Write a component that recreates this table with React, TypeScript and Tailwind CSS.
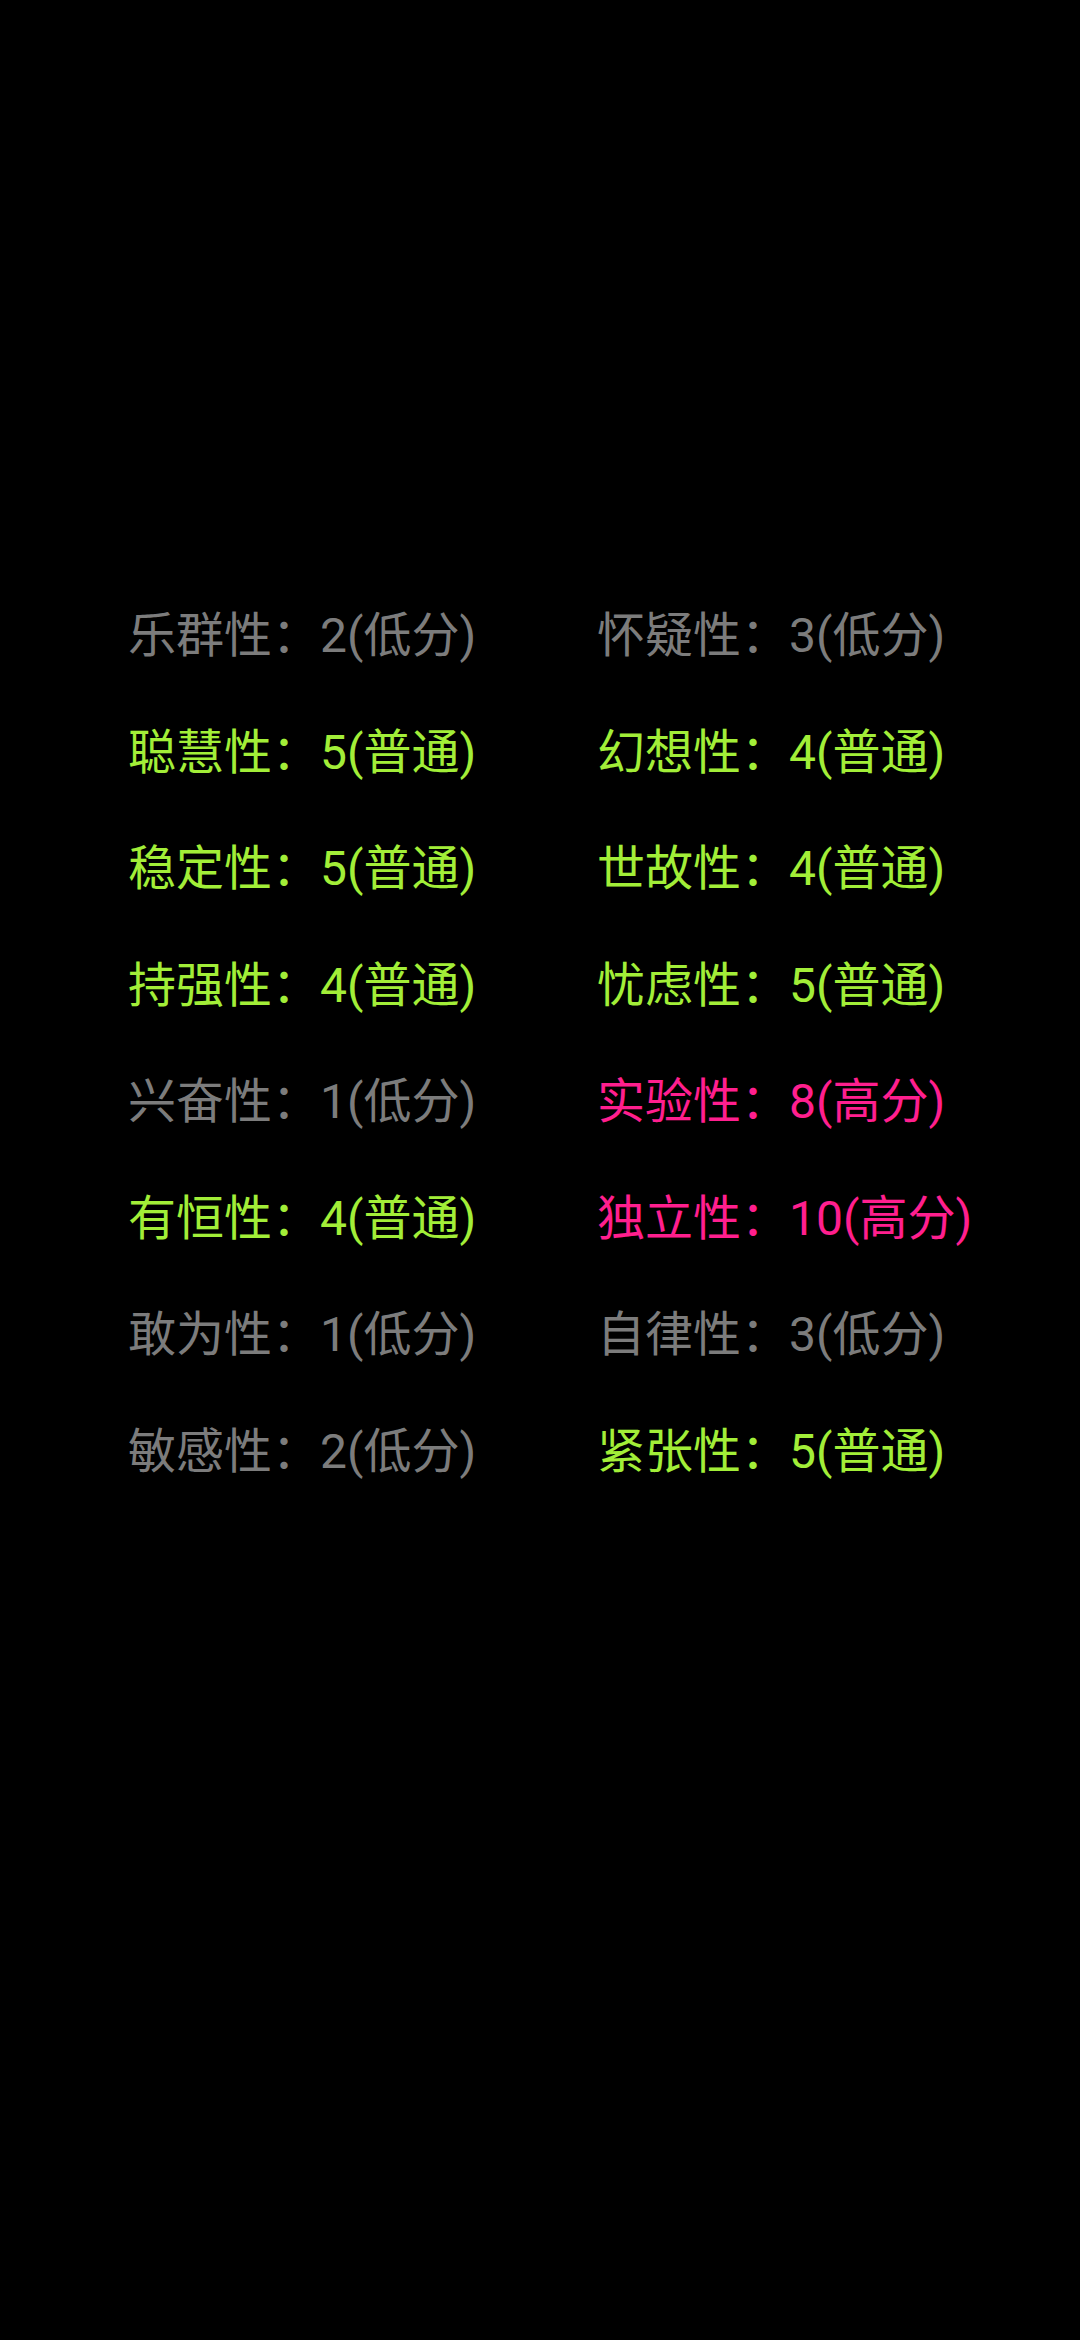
import React from "react";

type Item = { name: string; score: number; level: "低分" | "普通" | "高分" };

const rows: [Item, Item][] = [
  [{ name: "乐群性", score: 2, level: "低分" }, { name: "怀疑性", score: 3, level: "低分" }],
  [{ name: "聪慧性", score: 5, level: "普通" }, { name: "幻想性", score: 4, level: "普通" }],
  [{ name: "稳定性", score: 5, level: "普通" }, { name: "世故性", score: 4, level: "普通" }],
  [{ name: "持强性", score: 4, level: "普通" }, { name: "忧虑性", score: 5, level: "普通" }],
  [{ name: "兴奋性", score: 1, level: "低分" }, { name: "实验性", score: 8, level: "高分" }],
  [{ name: "有恒性", score: 4, level: "普通" }, { name: "独立性", score: 10, level: "高分" }],
  [{ name: "敢为性", score: 1, level: "低分" }, { name: "自律性", score: 3, level: "低分" }],
  [{ name: "敏感性", score: 2, level: "低分" }, { name: "紧张性", score: 5, level: "普通" }],
];

function Cell({ item }: { item: Item }) {
  const color =
    item.level === "低分"
      ? "text-[#7c7c7c]"
      : item.level === "普通"
      ? "text-[#a2ee38]"
      : "text-[#ff1f8e]";
  return (
    <div className={`${color} whitespace-nowrap`}>
      {item.name}：{item.score}({item.level})
    </div>
  );
}

export default function App() {
  return (
    <div
      className="w-[1080px] h-[2340px] bg-black pt-[578px] pl-[128px]"
      style={{ fontFamily: "Roboto, 'Noto Sans CJK SC', sans-serif" }}
    >
      <div className="grid grid-cols-[469px_auto] text-[48px] leading-[116.5px]">
        {rows.map(([a, b], i) => (
          <React.Fragment key={i}>
            <Cell item={a} />
            <Cell item={b} />
          </React.Fragment>
        ))}
      </div>
    </div>
  );
}
